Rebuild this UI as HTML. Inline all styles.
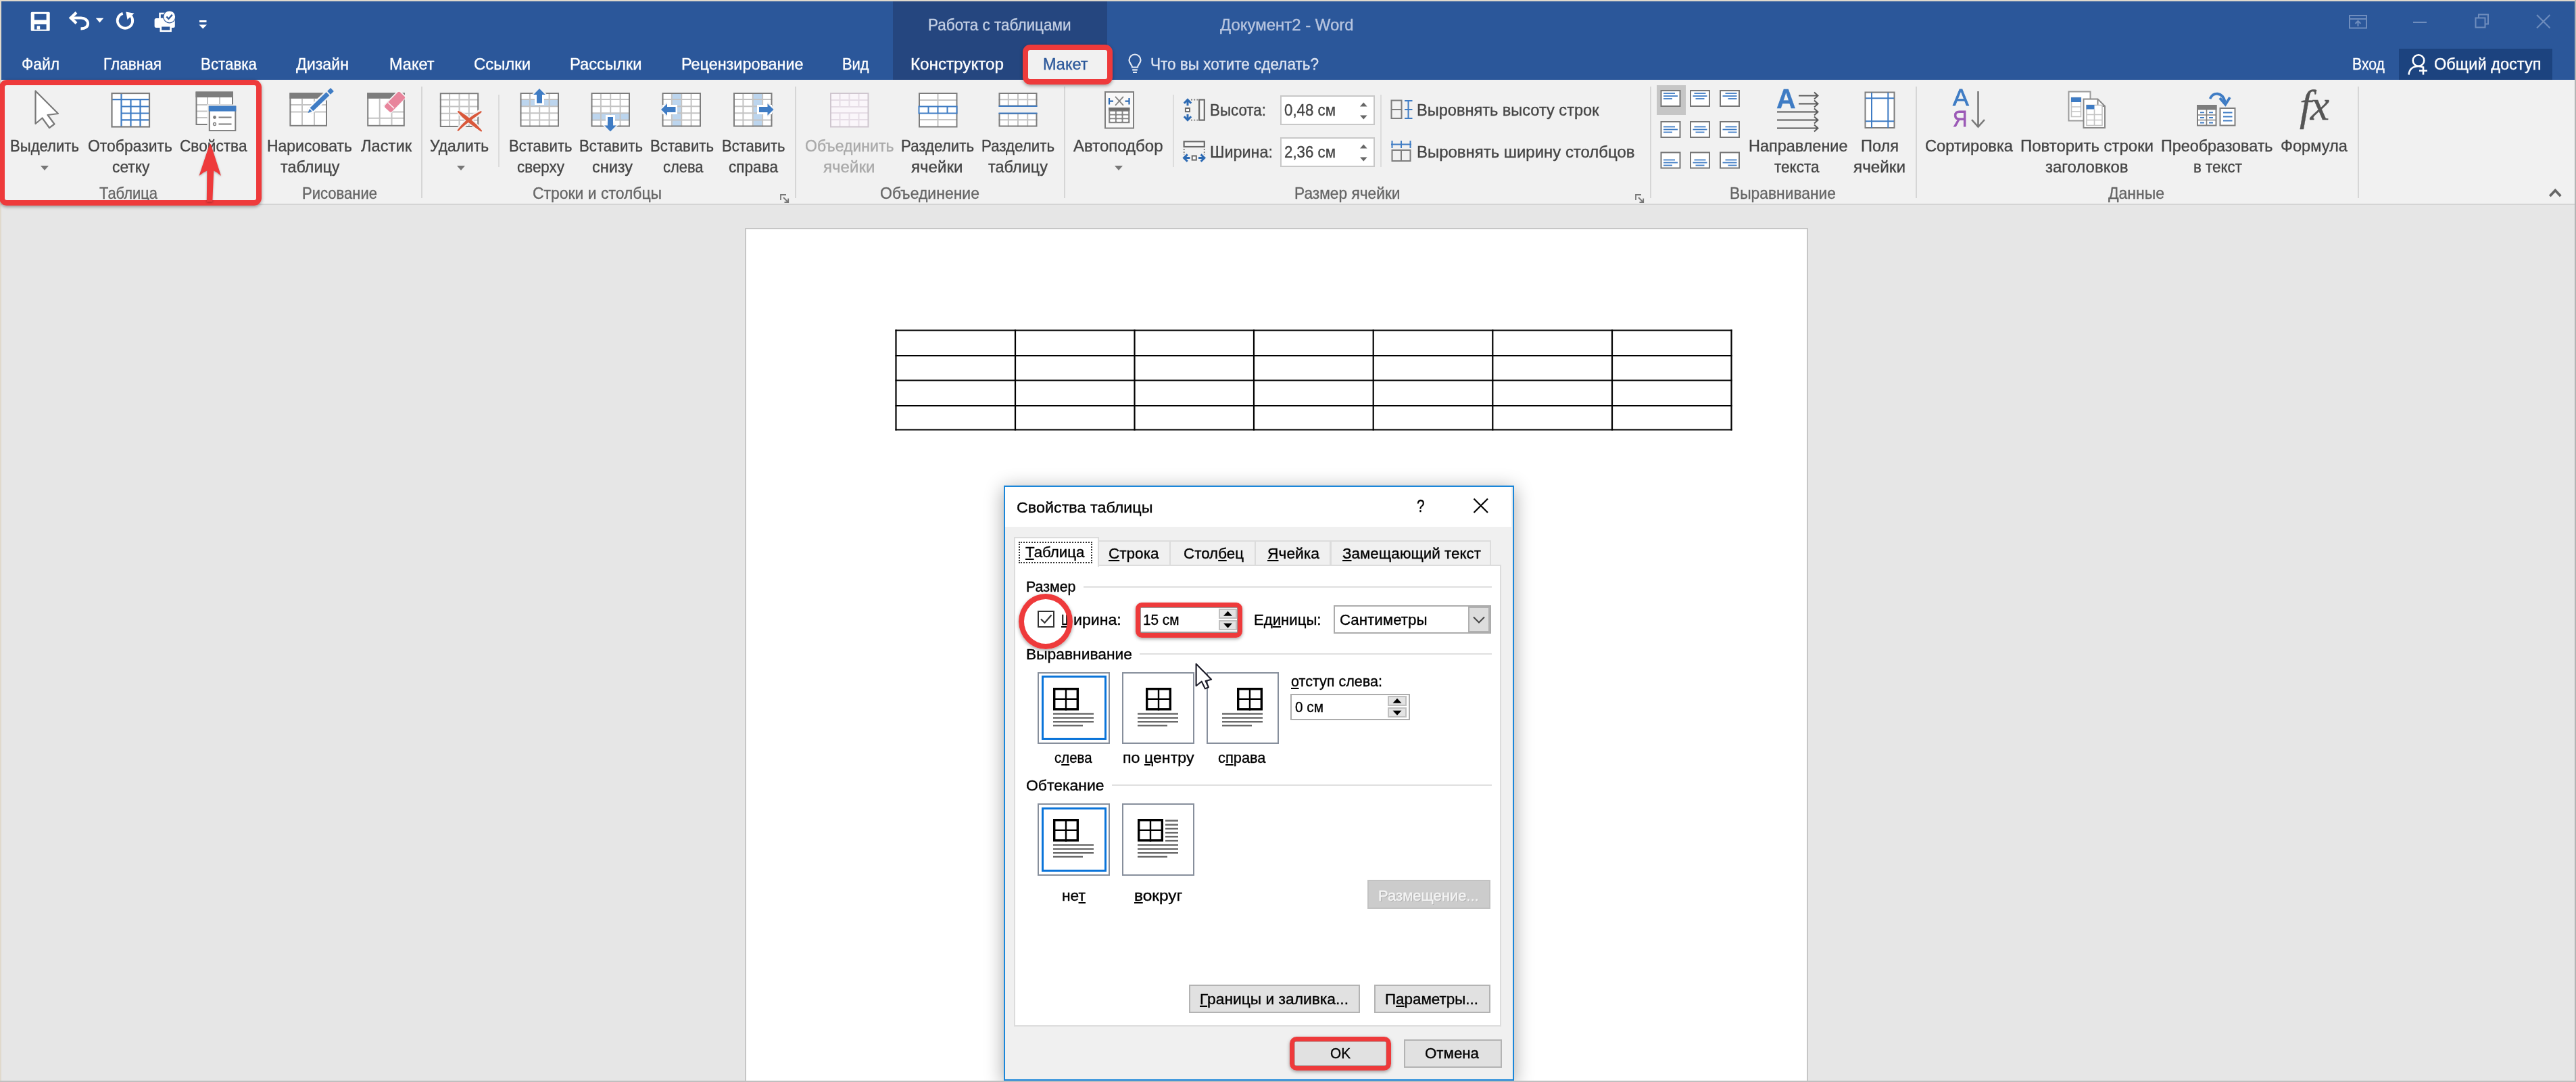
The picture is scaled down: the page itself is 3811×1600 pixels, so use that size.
<!DOCTYPE html>
<html lang="ru"><head><meta charset="utf-8"><title>Word</title><style>
html,body{margin:0;padding:0}
body{width:3811px;height:1600px;overflow:hidden;background:#e6e6e6;position:relative;
font-family:"Liberation Sans",sans-serif;}
.a{position:absolute;display:block}
.t{position:absolute;white-space:nowrap;transform-origin:0 0;font-family:"Liberation Sans",sans-serif;-webkit-text-stroke:0.35px currentColor;}
u{text-decoration:underline;text-decoration-thickness:1.6px;text-underline-offset:2.2px}
</style></head><body>
<div class="a" style="left:0.00px;top:0.00px;width:3811.00px;height:2.00px;background:#e0d9cc;"></div>
<div class="a" style="left:0.00px;top:0.00px;width:2.00px;height:1600.00px;background:#e0d9cc;"></div>
<div class="a" style="left:3809.00px;top:0.00px;width:2.00px;height:1600.00px;background:#b4b4b4;"></div>
<div class="a" style="left:2.00px;top:2.00px;width:3807.00px;height:116.00px;background:#2b579a;"></div>
<div class="a" style="left:1320.50px;top:2.00px;width:317.00px;height:116.00px;background:#25467f;"></div>
<div class="a" style="left:3549.00px;top:71.50px;width:227.00px;height:46.50px;background:#1c437f;"></div>
<div class="a" style="left:2.00px;top:118.00px;width:3807.00px;height:183.00px;background:#f1f1f1;"></div>
<div class="a" style="left:2.00px;top:299.50px;width:3807.00px;height:1.50px;background:#f8f8f8;"></div>
<div class="a" style="left:2.00px;top:301.00px;width:3807.00px;height:2.00px;background:#d4d4d4;"></div>
<svg class="a" style="left:0.00px;top:0.00px;" width="330" height="60" viewBox="0 0 330 60"><rect x="45.700" y="17.800" width="28" height="28" rx="1.500" fill="#fff"/><rect x="50.800" y="20.800" width="17.800" height="8.700" fill="#2b579a"/><rect x="50.800" y="36" width="17.800" height="7.600" fill="#2b579a"/><rect x="54.600" y="38.300" width="4.600" height="5.300" fill="#fff"/><path d="M105.500 26.500h14.500c5.500 0 10 3.500 10 8.500 0 4.500-4 7.500-10.500 7.300" fill="none" stroke="#fff" stroke-width="4.200"/><path d="M113 18.500l-8.300 8 8.300 8" fill="none" stroke="#fff" stroke-width="4.200"/><path d="M141.800 26.800h11.400l-5.700 6.700z" fill="#fff"/><path d="M181.700 19.800A11.200 11.200 0 1 0 193.800 23.600" fill="none" stroke="#fff" stroke-width="3.900"/><path d="M186.300 17.600l12.200 2.100-10 9.300z" fill="#fff"/><rect x="228.600" y="27.100" width="30.200" height="14" rx="2.500" fill="#fff"/><rect x="236.500" y="20" width="9" height="8" fill="none" stroke="#fff" stroke-width="2.600"/><rect x="237.800" y="38.200" width="14.800" height="7.600" fill="#2b579a" stroke="#fff" stroke-width="2.600"/><circle cx="250.700" cy="24.800" r="9.600" fill="#2b579a"/><circle cx="250.700" cy="24.800" r="8.400" fill="#fff"/><path d="M246.300 24.600l3.200 3.200 5.300-6" fill="none" stroke="#2b579a" stroke-width="2.400"/><rect x="295" y="30" width="10.500" height="3" fill="#fff"/><path d="M294.400 36.400h11.600l-5.800 6z" fill="#fff"/></svg>
<div class="t" style="left:1372.50px;top:25.18px;font-size:24px;line-height:24px;color:#c3cfe4;transform:scaleX(0.9372);">Работа с таблицами</div>
<div class="t" style="left:1804.50px;top:25.18px;font-size:24px;line-height:24px;color:#b7c5df;transform:scaleX(0.9972);">Документ2 - Word</div>
<svg class="a" style="left:3460.00px;top:10.00px;" width="330" height="40" viewBox="3460 10 330 40"><g fill="none" stroke="#6f8dbd" stroke-width="2"><rect x="3476" y="23" width="25" height="18.5"/><path d="M3476 28h25"/><path d="M3488.5 39v-8m-4 4l4-4 4 4"/><path d="M3570 33h20"/><rect x="3662.5" y="26.5" width="14" height="14"/><path d="M3667 26v-4.5h14v14h-4.5"/><path d="M3753 22l19.5 19.5m0-19.5l-19.5 19.5"/></g></svg>
<div class="t" style="left:32.00px;top:82.68px;font-size:24px;line-height:24px;color:#fff;transform:scaleX(0.9491);">Файл</div>
<div class="t" style="left:153.00px;top:82.68px;font-size:24px;line-height:24px;color:#fff;transform:scaleX(0.9415);">Главная</div>
<div class="t" style="left:297.00px;top:82.68px;font-size:24px;line-height:24px;color:#fff;transform:scaleX(0.9304);">Вставка</div>
<div class="t" style="left:438.00px;top:82.68px;font-size:24px;line-height:24px;color:#fff;transform:scaleX(0.9669);">Дизайн</div>
<div class="t" style="left:576.00px;top:82.68px;font-size:24px;line-height:24px;color:#fff;transform:scaleX(0.9790);">Макет</div>
<div class="t" style="left:700.50px;top:82.68px;font-size:24px;line-height:24px;color:#fff;transform:scaleX(0.9942);">Ссылки</div>
<div class="t" style="left:843.00px;top:82.68px;font-size:24px;line-height:24px;color:#fff;transform:scaleX(0.9887);">Рассылки</div>
<div class="t" style="left:1007.50px;top:82.68px;font-size:24px;line-height:24px;color:#fff;transform:scaleX(0.9740);">Рецензирование</div>
<div class="t" style="left:1245.50px;top:82.68px;font-size:24px;line-height:24px;color:#fff;transform:scaleX(0.9097);">Вид</div>
<div class="t" style="left:1347.00px;top:82.68px;font-size:24px;line-height:24px;color:#fff;transform:scaleX(1.0085);">Конструктор</div>
<div class="a" style="left:1519.00px;top:72.00px;width:120.00px;height:46.00px;background:#f1f1f1;"></div>
<div class="t" style="left:1543.00px;top:82.68px;font-size:24px;line-height:24px;color:#2b579a;transform:scaleX(0.9790);">Макет</div>
<svg class="a" style="left:1664.00px;top:78.00px;" width="30" height="34" viewBox="0 0 30 34"><g fill="none" stroke="#e3e9f4" stroke-width="2.2"><path d="M11 21.5c0-4-4.5-5.5-4.5-10.5a8.5 8.5 0 0 1 17 0c0 5-4.500 6.500-4.500 10.500z"/><path d="M11.2 25.300h7.600M12 29h6"/></g></svg>
<div class="t" style="left:1702.00px;top:82.68px;font-size:24px;line-height:24px;color:#dde4f1;transform:scaleX(0.9385);">Что вы хотите сделать?</div>
<div class="t" style="left:3480.00px;top:83.18px;font-size:24px;line-height:24px;color:#fff;transform:scaleX(0.8841);">Вход</div>
<svg class="a" style="left:3558.00px;top:76.00px;" width="40" height="40" viewBox="0 0 40 40"><g fill="none" stroke="#fff" stroke-width="2.6"><circle cx="20" cy="13.5" r="8.3"/><path d="M5.500 34.500c1-9 7-12.500 14.500-12.500c3 0 5.500.6 7.500 1.800"/><path d="M27 22.500v12M21 28.500h12"/></g></svg>
<div class="t" style="left:3601.00px;top:83.18px;font-size:24px;line-height:24px;color:#fff;transform:scaleX(0.9829);">Общий доступ</div>
<div class="a" style="left:622.50px;top:127.50px;width:2.00px;height:165.00px;background:#d6d6d6;"></div>
<div class="a" style="left:1176.00px;top:127.50px;width:2.00px;height:165.00px;background:#d6d6d6;"></div>
<div class="a" style="left:1574.00px;top:127.50px;width:2.00px;height:165.00px;background:#d6d6d6;"></div>
<div class="a" style="left:2441.00px;top:127.50px;width:2.00px;height:165.00px;background:#d6d6d6;"></div>
<div class="a" style="left:2833.50px;top:127.50px;width:2.00px;height:165.00px;background:#d6d6d6;"></div>
<div class="a" style="left:3488.00px;top:127.50px;width:2.00px;height:165.00px;background:#d6d6d6;"></div>
<div class="a" style="left:737.00px;top:139.50px;width:2.00px;height:107.50px;background:#dcdcdc;"></div>
<div class="a" style="left:1735.00px;top:139.50px;width:2.00px;height:107.50px;background:#dcdcdc;"></div>
<div class="a" style="left:2042.00px;top:139.50px;width:2.00px;height:107.50px;background:#dcdcdc;"></div>
<div class="a" style="left:1894.00px;top:141.00px;width:140.00px;height:44.00px;background:#fff;border:2px solid #c8c8c8;box-sizing:border-box;"></div>
<svg class="a" style="left:2011.00px;top:150.00px;" width="13" height="28" viewBox="0 0 13 28"><path d="M1 7.500l5.300-6 5.300 6zM1 20.500l5.300 6 5.300-6z" fill="#666"/></svg>
<div class="a" style="left:1894.00px;top:203.00px;width:140.00px;height:44.00px;background:#fff;border:2px solid #c8c8c8;box-sizing:border-box;"></div>
<svg class="a" style="left:2011.00px;top:212.00px;" width="13" height="28" viewBox="0 0 13 28"><path d="M1 7.500l5.300-6 5.300 6zM1 20.500l5.300 6 5.300-6z" fill="#666"/></svg>
<div class="t" style="left:15.00px;top:203.68px;font-size:24px;line-height:24px;color:#444444;transform:scaleX(0.9212);">Выделить</div>
<div class="t" style="left:130.00px;top:203.68px;font-size:24px;line-height:24px;color:#444444;transform:scaleX(0.9555);">Отобразить</div>
<div class="t" style="left:165.50px;top:234.68px;font-size:24px;line-height:24px;color:#444444;transform:scaleX(0.9517);">сетку</div>
<div class="t" style="left:266.00px;top:203.68px;font-size:24px;line-height:24px;color:#444444;transform:scaleX(0.9441);">Свойства</div>
<div class="t" style="left:395.00px;top:203.68px;font-size:24px;line-height:24px;color:#444444;transform:scaleX(0.9556);">Нарисовать</div>
<div class="t" style="left:415.00px;top:234.68px;font-size:24px;line-height:24px;color:#444444;transform:scaleX(0.9734);">таблицу</div>
<div class="t" style="left:534.00px;top:203.68px;font-size:24px;line-height:24px;color:#444444;transform:scaleX(0.9869);">Ластик</div>
<div class="t" style="left:636.00px;top:203.68px;font-size:24px;line-height:24px;color:#444444;transform:scaleX(0.9495);">Удалить</div>
<div class="t" style="left:752.50px;top:203.68px;font-size:24px;line-height:24px;color:#444444;transform:scaleX(0.9191);">Вставить</div>
<div class="t" style="left:764.50px;top:234.68px;font-size:24px;line-height:24px;color:#444444;transform:scaleX(0.9345);">сверху</div>
<div class="t" style="left:857.00px;top:203.68px;font-size:24px;line-height:24px;color:#444444;transform:scaleX(0.9240);">Вставить</div>
<div class="t" style="left:875.50px;top:234.68px;font-size:24px;line-height:24px;color:#444444;transform:scaleX(0.9773);">снизу</div>
<div class="t" style="left:962.00px;top:203.68px;font-size:24px;line-height:24px;color:#444444;transform:scaleX(0.9240);">Вставить</div>
<div class="t" style="left:980.50px;top:234.68px;font-size:24px;line-height:24px;color:#444444;transform:scaleX(0.9128);">слева</div>
<div class="t" style="left:1067.50px;top:203.68px;font-size:24px;line-height:24px;color:#444444;transform:scaleX(0.9191);">Вставить</div>
<div class="t" style="left:1078.00px;top:234.68px;font-size:24px;line-height:24px;color:#444444;transform:scaleX(0.9417);">справа</div>
<div class="t" style="left:1190.50px;top:203.68px;font-size:24px;line-height:24px;color:#a9a9a9;transform:scaleX(0.9598);">Объединить</div>
<div class="t" style="left:1218.00px;top:234.68px;font-size:24px;line-height:24px;color:#a9a9a9;transform:scaleX(1.0045);">ячейки</div>
<div class="t" style="left:1333.00px;top:203.68px;font-size:24px;line-height:24px;color:#444444;transform:scaleX(0.9292);">Разделить</div>
<div class="t" style="left:1348.00px;top:234.68px;font-size:24px;line-height:24px;color:#444444;transform:scaleX(1.0045);">ячейки</div>
<div class="t" style="left:1452.00px;top:203.68px;font-size:24px;line-height:24px;color:#444444;transform:scaleX(0.9292);">Разделить</div>
<div class="t" style="left:1462.00px;top:234.68px;font-size:24px;line-height:24px;color:#444444;transform:scaleX(0.9789);">таблицу</div>
<div class="t" style="left:1588.00px;top:203.68px;font-size:24px;line-height:24px;color:#444444;transform:scaleX(0.9995);">Автоподбор</div>
<div class="t" style="left:1789.50px;top:150.68px;font-size:24px;line-height:24px;color:#444444;transform:scaleX(0.9317);">Высота:</div>
<div class="t" style="left:1789.50px;top:212.68px;font-size:24px;line-height:24px;color:#444444;transform:scaleX(0.9746);">Ширина:</div>
<div class="t" style="left:1900.00px;top:150.68px;font-size:24px;line-height:24px;color:#444444;transform:scaleX(0.9282);">0,48 см</div>
<div class="t" style="left:1900.00px;top:212.68px;font-size:24px;line-height:24px;color:#444444;transform:scaleX(0.9282);">2,36 см</div>
<div class="t" style="left:2096.00px;top:150.68px;font-size:24px;line-height:24px;color:#444444;transform:scaleX(0.9824);">Выровнять высоту строк</div>
<div class="t" style="left:2096.00px;top:212.68px;font-size:24px;line-height:24px;color:#444444;transform:scaleX(0.9974);">Выровнять ширину столбцов</div>
<div class="t" style="left:2586.50px;top:203.68px;font-size:24px;line-height:24px;color:#444444;transform:scaleX(0.9771);">Направление</div>
<div class="t" style="left:2625.00px;top:234.68px;font-size:24px;line-height:24px;color:#444444;transform:scaleX(0.9378);">текста</div>
<div class="t" style="left:2753.00px;top:203.68px;font-size:24px;line-height:24px;color:#444444;transform:scaleX(0.9812);">Поля</div>
<div class="t" style="left:2742.00px;top:234.68px;font-size:24px;line-height:24px;color:#444444;transform:scaleX(1.0110);">ячейки</div>
<div class="t" style="left:2848.00px;top:203.68px;font-size:24px;line-height:24px;color:#444444;transform:scaleX(0.9869);">Сортировка</div>
<div class="t" style="left:2989.00px;top:203.68px;font-size:24px;line-height:24px;color:#444444;transform:scaleX(0.9979);">Повторить строки</div>
<div class="t" style="left:3025.50px;top:234.68px;font-size:24px;line-height:24px;color:#444444;transform:scaleX(0.9988);">заголовков</div>
<div class="t" style="left:3197.00px;top:203.68px;font-size:24px;line-height:24px;color:#444444;transform:scaleX(0.9715);">Преобразовать</div>
<div class="t" style="left:3245.00px;top:234.68px;font-size:24px;line-height:24px;color:#444444;transform:scaleX(0.9320);">в текст</div>
<div class="t" style="left:3374.00px;top:203.68px;font-size:24px;line-height:24px;color:#444444;transform:scaleX(0.9847);">Формула</div>
<div class="t" style="left:147.00px;top:274.18px;font-size:24px;line-height:24px;color:#666666;transform:scaleX(0.9139);">Таблица</div>
<div class="t" style="left:447.00px;top:274.18px;font-size:24px;line-height:24px;color:#666666;transform:scaleX(0.9183);">Рисование</div>
<div class="t" style="left:788.00px;top:274.18px;font-size:24px;line-height:24px;color:#666666;transform:scaleX(0.9552);">Строки и столбцы</div>
<div class="t" style="left:1302.00px;top:274.18px;font-size:24px;line-height:24px;color:#666666;transform:scaleX(0.9579);">Объединение</div>
<div class="t" style="left:1914.50px;top:274.18px;font-size:24px;line-height:24px;color:#666666;transform:scaleX(0.9467);">Размер ячейки</div>
<div class="t" style="left:2559.00px;top:274.18px;font-size:24px;line-height:24px;color:#666666;transform:scaleX(0.9503);">Выравнивание</div>
<div class="t" style="left:3119.00px;top:274.18px;font-size:24px;line-height:24px;color:#666666;transform:scaleX(0.9572);">Данные</div>
<svg class="a" style="left:60.00px;top:244.50px;" width="12" height="7" viewBox="0 0 12 7"><path d="M0 0h12l-6 7z" fill="#777"/></svg>
<svg class="a" style="left:675.50px;top:244.50px;" width="12" height="7" viewBox="0 0 12 7"><path d="M0 0h12l-6 7z" fill="#777"/></svg>
<svg class="a" style="left:1648.50px;top:244.50px;" width="12" height="7" viewBox="0 0 12 7"><path d="M0 0h12l-6 7z" fill="#777"/></svg>
<svg class="a" style="left:1154.00px;top:287.00px;" width="14" height="14" viewBox="0 0 14 14"><g fill="none" stroke="#777" stroke-width="1.8"><path d="M1 9V1h8"/><path d="M5 5l7 7M12.200 6.500v5.700h-5.700"/></g></svg>
<svg class="a" style="left:2419.00px;top:287.00px;" width="14" height="14" viewBox="0 0 14 14"><g fill="none" stroke="#777" stroke-width="1.8"><path d="M1 9V1h8"/><path d="M5 5l7 7M12.200 6.500v5.700h-5.700"/></g></svg>
<svg class="a" style="left:3769.00px;top:277.00px;" width="23" height="16" viewBox="0 0 23 16"><path d="M3.300 13l8-8.500 8 8.500" fill="none" stroke="#666" stroke-width="3.800"/></svg>
<svg class="a" style="left:0.00px;top:120.00px;" width="2120" height="130" viewBox="0 120 2120 130"><path d="M52.500 134.500V183l10-8.500 10.500 14.500 7.500-5.500-10-13.500 15.500-2z" fill="#fff" stroke="#7a7a7a" stroke-width="2.2" stroke-linejoin="round"/><rect x="165.5" y="138" width="55" height="49" fill="#fff"/><path d="M179.5 138V187" stroke="#3f7cc4" stroke-width="2.2"/><path d="M193.5 147V187" stroke="#3f7cc4" stroke-width="2.2"/><path d="M207.5 147V187" stroke="#3f7cc4" stroke-width="2.2"/><path d="M165 147.200H221" stroke="#3f7cc4" stroke-width="2.2"/><path d="M179.500 157.5H221" stroke="#3f7cc4" stroke-width="2.2"/><path d="M179.500 167.5H221" stroke="#3f7cc4" stroke-width="2.2"/><path d="M179.500 177.3H221" stroke="#3f7cc4" stroke-width="2.2"/><rect x="165.500" y="138" width="55.500" height="49.500" fill="none" stroke="#7d7d7d" stroke-width="2.2"/><rect x="290" y="136" width="54" height="48" fill="#fff"/><path d="M307 144v11M325 144v11" stroke="#c3c3c3" stroke-width="2"/><path d="M290 155H344" stroke="#c3c3c3" stroke-width="2"/><path d="M290 164.5H344" stroke="#c3c3c3" stroke-width="2"/><path d="M290 174H344" stroke="#c3c3c3" stroke-width="2"/><rect x="290.500" y="136.500" width="53.500" height="47.500" fill="none" stroke="#7d7d7d" stroke-width="2"/><rect x="289.500" y="135.500" width="55.500" height="8.500" fill="#7d7d7d"/><rect x="306.500" y="154.500" width="45" height="42" fill="#f1f1f1"/><rect x="309.800" y="157.600" width="38.500" height="35.500" fill="#fff" stroke="#7d7d7d" stroke-width="2"/><rect x="308.800" y="156.600" width="40.500" height="8" fill="#3f7cc4"/><circle cx="317.500" cy="173.500" r="2.400" fill="#7d7d7d"/><circle cx="317.500" cy="183.500" r="2" fill="none" stroke="#7d7d7d" stroke-width="1.300"/><path d="M323.500 173.500h19M323.500 183.500h19" stroke="#7d7d7d" stroke-width="1.800"/><rect x="429" y="138" width="54" height="48" fill="#fff"/><path d="M447 146v40M465 146v40M429 155h54M429 165.500h54" stroke="#c3c3c3" stroke-width="2"/><rect x="429.400" y="138.200" width="53.600" height="47.600" fill="none" stroke="#7d7d7d" stroke-width="2"/><rect x="428.400" y="137.200" width="55.600" height="8.600" fill="#7d7d7d"/><path d="M461.5 169.0L496.8 135.2L489.1 127.1L453.8 160.9z" fill="#f1f1f1"/><path d="M462.0 168.0L480.8 150.0L473.6 142.5L454.8 160.5z" fill="#fdfdfd"/><path d="M455.5 167.0L461.7 164.8L458.0 160.9z" fill="#3f7cc4"/><path d="M463.3 164.3L487.5 141.1L482.7 136.2L458.6 159.4z" fill="#3f7cc4"/><path d="M488.9 139.7L493.9 135.0L489.1 130.0L484.2 134.8z" fill="#3f7cc4"/><rect x="544" y="138" width="54" height="48" fill="#fff"/><path d="M561.700 146v40M579.500 166v20M544 174.800h54M580 165.500h18" stroke="#c3c3c3" stroke-width="2"/><rect x="544.200" y="138.200" width="53.600" height="47.600" fill="none" stroke="#7d7d7d" stroke-width="2"/><rect x="543.200" y="137.200" width="55.600" height="8.600" fill="#7d7d7d"/><path d="M590.100 132.400l12 11.200-23.800 24.300-12-11.600z" fill="#f6f6f6"/><path d="M588.400 136.600c1.200-1.200 2.400-1.200 3.600-.1l6.300 5.900c1.200 1.200 1.200 2.400.1 3.600l-18.600 19c-1.200 1.200-2.400 1.200-3.600.1l-6.300-5.900c-1.200-1.200-1.200-2.400-.1-3.600z" fill="#e8859c"/><path d="M573.900 151.500l9 8.700" stroke="#fbeef1" stroke-width="1.600"/><rect x="651.8" y="138.2" width="55.4" height="48.8" fill="#fff"/><path d="M665.1 137.2v50.8" stroke="#c3c3c3" stroke-width="2"/><path d="M679.5 137.2v50.8" stroke="#c3c3c3" stroke-width="2"/><path d="M693.8 137.2v50.8" stroke="#c3c3c3" stroke-width="2"/><path d="M650.8 147.4h57.4" stroke="#c3c3c3" stroke-width="2"/><path d="M650.8 157.5h57.4" stroke="#c3c3c3" stroke-width="2"/><path d="M650.8 167.7h57.4" stroke="#c3c3c3" stroke-width="2"/><path d="M650.8 177.8h57.4" stroke="#c3c3c3" stroke-width="2"/><rect x="651.8" y="138.2" width="55.4" height="48.8" fill="none" stroke="#7d7d7d" stroke-width="2"/><path d="M678.500 165.500c11 8 22 17.500 33 27.800" stroke="#f1f1f1" stroke-width="8" fill="none"/><path d="M710.900 165.500c-12 7.500-23 16.500-33 27" stroke="#f1f1f1" stroke-width="8" fill="none"/><path d="M678 165c7 3 23 15 34 28.500c-13-9-25-17-34-28.500z" fill="#d9583b" stroke="#d9583b" stroke-width="2.200" stroke-linejoin="round"/><path d="M711.500 165.300c-9 4-24 14-33.800 27.500c11-11 22-18 33.800-27.500z" fill="#d9583b" stroke="#d9583b" stroke-width="2.200" stroke-linejoin="round"/><rect x="770.5" y="138.0" width="55.5" height="48.5" fill="#fff"/><rect x="771" y="147.500" width="54.500" height="10" fill="#bcd5ee"/><path d="M783.9 137v50.5" stroke="#c3c3c3" stroke-width="2"/><path d="M798.2 137v50.5" stroke="#c3c3c3" stroke-width="2"/><path d="M812.6 137v50.5" stroke="#c3c3c3" stroke-width="2"/><path d="M769.5 147.1h57.5" stroke="#c3c3c3" stroke-width="2"/><path d="M769.5 157.2h57.5" stroke="#c3c3c3" stroke-width="2"/><path d="M769.5 167.3h57.5" stroke="#c3c3c3" stroke-width="2"/><path d="M769.5 177.4h57.5" stroke="#c3c3c3" stroke-width="2"/><rect x="770.5" y="138.0" width="55.5" height="48.5" fill="none" stroke="#7d7d7d" stroke-width="2"/><path d="M798 128l11.500 12h-6v14h-11v-14h-6z" fill="#f1f1f1"/><rect x="791" y="137" width="14" height="18" fill="#fff"/><path d="M798 131l8.800 9h-4.800v12.500h-8v-12.500h-4.800z" fill="#3f7cc4"/><rect x="875.5" y="138.0" width="55.5" height="48.5" fill="#fff"/><rect x="876" y="168" width="54.500" height="10.500" fill="#bcd5ee"/><path d="M888.9 137v50.5" stroke="#c3c3c3" stroke-width="2"/><path d="M903.2 137v50.5" stroke="#c3c3c3" stroke-width="2"/><path d="M917.6 137v50.5" stroke="#c3c3c3" stroke-width="2"/><path d="M874.5 147.1h57.5" stroke="#c3c3c3" stroke-width="2"/><path d="M874.5 157.2h57.5" stroke="#c3c3c3" stroke-width="2"/><path d="M874.5 167.3h57.5" stroke="#c3c3c3" stroke-width="2"/><path d="M874.5 177.4h57.5" stroke="#c3c3c3" stroke-width="2"/><rect x="875.5" y="138.0" width="55.5" height="48.5" fill="none" stroke="#7d7d7d" stroke-width="2"/><rect x="896" y="170" width="14" height="18" fill="#fff"/><path d="M903 197l11.500-12h-6v-4h-11v4h-6z" fill="#f1f1f1"/><path d="M903 194.500l8.800-9h-4.800v-12.500h-8v12.500h-4.800z" fill="#3f7cc4"/><rect x="980.5" y="138.0" width="55.5" height="48.5" fill="#fff"/><rect x="995" y="138.500" width="12.500" height="47.500" fill="#bcd5ee"/><path d="M993.9 137v50.5" stroke="#c3c3c3" stroke-width="2"/><path d="M1008.2 137v50.5" stroke="#c3c3c3" stroke-width="2"/><path d="M1022.6 137v50.5" stroke="#c3c3c3" stroke-width="2"/><path d="M979.5 147.1h57.5" stroke="#c3c3c3" stroke-width="2"/><path d="M979.5 157.2h57.5" stroke="#c3c3c3" stroke-width="2"/><path d="M979.5 167.3h57.5" stroke="#c3c3c3" stroke-width="2"/><path d="M979.5 177.4h57.5" stroke="#c3c3c3" stroke-width="2"/><rect x="980.5" y="138.0" width="55.5" height="48.5" fill="none" stroke="#7d7d7d" stroke-width="2"/><path d="M975 162l12-11.500v6h4v11h-4v6z" fill="#f1f1f1"/><rect x="980" y="155" width="22" height="14" fill="#fff"/><path d="M978 162l9-8.800v4.800h12.500v8h-12.500v4.800z" fill="#3f7cc4"/><rect x="1086.0" y="138.0" width="55.5" height="48.5" fill="#fff"/><rect x="1114.500" y="138.500" width="12.500" height="47.500" fill="#bcd5ee"/><path d="M1099.4 137v50.5" stroke="#c3c3c3" stroke-width="2"/><path d="M1113.8 137v50.5" stroke="#c3c3c3" stroke-width="2"/><path d="M1128.1 137v50.5" stroke="#c3c3c3" stroke-width="2"/><path d="M1085 147.1h57.5" stroke="#c3c3c3" stroke-width="2"/><path d="M1085 157.2h57.5" stroke="#c3c3c3" stroke-width="2"/><path d="M1085 167.3h57.5" stroke="#c3c3c3" stroke-width="2"/><path d="M1085 177.4h57.5" stroke="#c3c3c3" stroke-width="2"/><rect x="1086.0" y="138.0" width="55.5" height="48.5" fill="none" stroke="#7d7d7d" stroke-width="2"/><path d="M1147.500 162l-12-11.500v6h-4v11h4v6z" fill="#f1f1f1"/><rect x="1120" y="155" width="22" height="14" fill="#fff"/><path d="M1144.500 162l-9-8.800v4.800h-12.500v8h12.500v4.800z" fill="#3f7cc4"/><rect x="1229" y="138" width="55" height="49" fill="#faf6fa"/><path d="M1242.5 138v20M1242.5 167v20" stroke="#e6dde6" stroke-width="2"/><path d="M1256.5 138v20M1256.5 167v20" stroke="#e6dde6" stroke-width="2"/><path d="M1270.5 138v20M1270.5 167v20" stroke="#e6dde6" stroke-width="2"/><path d="M1229 148h55" stroke="#e6dde6" stroke-width="2"/><path d="M1229 158h55" stroke="#e6dde6" stroke-width="2"/><path d="M1229 167h55" stroke="#e6dde6" stroke-width="2"/><path d="M1229 177h55" stroke="#e6dde6" stroke-width="2"/><rect x="1229" y="138" width="55.500" height="49.500" fill="none" stroke="#cfc6cf" stroke-width="2"/><rect x="1360" y="138" width="55" height="49" fill="#fff"/><path d="M1387.500 138v20M1387.500 167v20" stroke="#c3c3c3" stroke-width="2"/><path d="M1360 148h55" stroke="#c3c3c3" stroke-width="2"/><path d="M1360 177h55" stroke="#c3c3c3" stroke-width="2"/><rect x="1360" y="138" width="55.500" height="49.500" fill="none" stroke="#7d7d7d" stroke-width="2"/><rect x="1359.500" y="157.500" width="56" height="10" fill="#fff" stroke="#3f7cc4" stroke-width="2"/><path d="M1373.5 157.500v10" stroke="#3f7cc4" stroke-width="2"/><path d="M1387.5 157.500v10" stroke="#3f7cc4" stroke-width="2"/><path d="M1401.5 157.500v10" stroke="#3f7cc4" stroke-width="2"/><rect x="1478.5" y="138.0" width="55" height="18.5" fill="#fff"/><path d="M1491.8 137v20.5" stroke="#c3c3c3" stroke-width="2"/><path d="M1506.0 137v20.5" stroke="#c3c3c3" stroke-width="2"/><path d="M1520.2 137v20.5" stroke="#c3c3c3" stroke-width="2"/><path d="M1477.5 147.2h57" stroke="#c3c3c3" stroke-width="2"/><rect x="1478.5" y="138.0" width="55" height="18.5" fill="none" stroke="#7d7d7d" stroke-width="2"/><rect x="1478.5" y="168.0" width="55" height="18.5" fill="#fff"/><path d="M1491.8 167v20.5" stroke="#c3c3c3" stroke-width="2"/><path d="M1506.0 167v20.5" stroke="#c3c3c3" stroke-width="2"/><path d="M1520.2 167v20.5" stroke="#c3c3c3" stroke-width="2"/><path d="M1477.5 177.2h57" stroke="#c3c3c3" stroke-width="2"/><rect x="1478.5" y="168.0" width="55" height="18.5" fill="none" stroke="#7d7d7d" stroke-width="2"/><path d="M1477.500 157h57M1477.500 167.500h57" stroke="#3f7cc4" stroke-width="2.200"/><rect x="1635" y="136" width="42" height="53.500" fill="#f8f8f8" stroke="#808080" stroke-width="2"/><g stroke="#2d6ab3" stroke-width="2.200" fill="none"><path d="M1641 145v9.500M1670.500 145v9.500M1641 149.700h6M1664.500 149.700h6"/></g><path d="M1650 142.800l12 13M1662 142.800l-12 13" stroke="#808080" stroke-width="1.700"/><rect x="1640.200" y="159" width="31.200" height="23.200" fill="#858585"/><rect x="1640.200" y="159" width="31.200" height="4.500" fill="#6e6e6e"/><rect x="1642.2" y="164.8" width="7.800" height="3.900" rx="1" fill="#fff"/><rect x="1651.8" y="164.8" width="7.800" height="3.900" rx="1" fill="#fff"/><rect x="1661.4" y="164.8" width="7.800" height="3.900" rx="1" fill="#fff"/><rect x="1642.2" y="170.5" width="7.800" height="3.900" rx="1" fill="#fff"/><rect x="1651.8" y="170.5" width="7.800" height="3.900" rx="1" fill="#fff"/><rect x="1661.4" y="170.5" width="7.800" height="3.900" rx="1" fill="#fff"/><rect x="1642.2" y="176.2" width="7.800" height="3.900" rx="1" fill="#fff"/><rect x="1651.8" y="176.2" width="7.800" height="3.900" rx="1" fill="#fff"/><rect x="1661.4" y="176.2" width="7.800" height="3.900" rx="1" fill="#fff"/><rect x="1774.100" y="147.500" width="7.700" height="30.100" fill="#f6f6f6" stroke="#6a6a6a" stroke-width="2.200"/><path d="M1762 147.500h10M1762 177.600h10" stroke="#777" stroke-width="1.800" stroke-dasharray="2 2.200"/><rect x="1753.900" y="160" width="6.100" height="5.100" fill="#fff" stroke="#6a6a6a" stroke-width="2"/><g stroke="#2d6ab3" stroke-width="3" fill="none"><path d="M1757 156.200v-7.500M1751.800 152.800l5.200-5.300 5.200 5.300M1757 168.900v7.500M1751.800 172.300l5.200 5.300 5.200-5.300"/></g><rect x="1751.600" y="209.300" width="30.200" height="7.700" fill="#f6f6f6" stroke="#6a6a6a" stroke-width="2.200"/><path d="M1751.700 220v9M1781.700 220v9" stroke="#777" stroke-width="1.800" stroke-dasharray="2 2.200"/><rect x="1763.700" y="230.500" width="6.100" height="6.100" fill="#fff" stroke="#6a6a6a" stroke-width="2"/><g stroke="#2d6ab3" stroke-width="3" fill="none"><path d="M1760.400 233.600h-8M1756.800 228.400l-5.300 5.200 5.300 5.200M1773 233.600h8M1776.600 228.400l5.300 5.200-5.300 5.200"/></g><rect x="2058.500" y="148.500" width="15" height="26.500" fill="none" stroke="#7d7d7d" stroke-width="2"/><path d="M2058.500 162h15" stroke="#7d7d7d" stroke-width="2"/><g stroke="#3f7cc4" stroke-width="2" fill="none"><path d="M2083.500 148v28M2078 149h11.500M2078 162h11.500M2078 175h11.500"/></g><rect x="2059.500" y="222" width="27" height="16" fill="none" stroke="#7d7d7d" stroke-width="2"/><path d="M2073 222v16" stroke="#7d7d7d" stroke-width="2"/><g stroke="#3f7cc4" stroke-width="2" fill="none"><path d="M2058 213.500h30M2059.500 208v11M2073 208v11M2086.500 208v11"/></g></svg>
<div class="a" style="left:2451.00px;top:125.50px;width:43.00px;height:44.50px;background:#c6c6c6;"></div>
<svg class="a" style="left:2440.00px;top:120.00px;" width="1060" height="135" viewBox="2440 120 1060 135"><rect x="2457.5" y="134" width="28" height="23" fill="#fff" stroke="#777" stroke-width="2"/><path d="M2461.0 138.0h17" stroke="#3f7cc4" stroke-width="1.800"/><path d="M2461.0 142.0h21" stroke="#3f7cc4" stroke-width="1.800"/><path d="M2461.0 146.0h13" stroke="#3f7cc4" stroke-width="1.800"/><rect x="2501" y="134" width="28" height="23" fill="#fff" stroke="#777" stroke-width="2"/><path d="M2506.5 138.0h17" stroke="#3f7cc4" stroke-width="1.800"/><path d="M2504.5 142.0h21" stroke="#3f7cc4" stroke-width="1.800"/><path d="M2508.5 146.0h13" stroke="#3f7cc4" stroke-width="1.800"/><rect x="2545" y="134" width="28" height="23" fill="#fff" stroke="#777" stroke-width="2"/><path d="M2552.5 138.0h17" stroke="#3f7cc4" stroke-width="1.800"/><path d="M2548.5 142.0h21" stroke="#3f7cc4" stroke-width="1.800"/><path d="M2556.5 146.0h13" stroke="#3f7cc4" stroke-width="1.800"/><rect x="2457.5" y="180" width="28" height="23" fill="#fff" stroke="#777" stroke-width="2"/><path d="M2461.0 187.5h17" stroke="#3f7cc4" stroke-width="1.800"/><path d="M2461.0 191.5h21" stroke="#3f7cc4" stroke-width="1.800"/><path d="M2461.0 195.5h13" stroke="#3f7cc4" stroke-width="1.800"/><rect x="2501" y="180" width="28" height="23" fill="#fff" stroke="#777" stroke-width="2"/><path d="M2506.5 187.5h17" stroke="#3f7cc4" stroke-width="1.800"/><path d="M2504.5 191.5h21" stroke="#3f7cc4" stroke-width="1.800"/><path d="M2508.5 195.5h13" stroke="#3f7cc4" stroke-width="1.800"/><rect x="2545" y="180" width="28" height="23" fill="#fff" stroke="#777" stroke-width="2"/><path d="M2552.5 187.5h17" stroke="#3f7cc4" stroke-width="1.800"/><path d="M2548.5 191.5h21" stroke="#3f7cc4" stroke-width="1.800"/><path d="M2556.5 195.5h13" stroke="#3f7cc4" stroke-width="1.800"/><rect x="2457.5" y="225.5" width="28" height="23" fill="#fff" stroke="#777" stroke-width="2"/><path d="M2461.0 236.5h17" stroke="#3f7cc4" stroke-width="1.800"/><path d="M2461.0 240.5h21" stroke="#3f7cc4" stroke-width="1.800"/><path d="M2461.0 244.5h13" stroke="#3f7cc4" stroke-width="1.800"/><rect x="2501" y="225.5" width="28" height="23" fill="#fff" stroke="#777" stroke-width="2"/><path d="M2506.5 236.5h17" stroke="#3f7cc4" stroke-width="1.800"/><path d="M2504.5 240.5h21" stroke="#3f7cc4" stroke-width="1.800"/><path d="M2508.5 244.5h13" stroke="#3f7cc4" stroke-width="1.800"/><rect x="2545" y="225.5" width="28" height="23" fill="#fff" stroke="#777" stroke-width="2"/><path d="M2552.5 236.5h17" stroke="#3f7cc4" stroke-width="1.800"/><path d="M2548.5 240.5h21" stroke="#3f7cc4" stroke-width="1.800"/><path d="M2556.5 244.5h13" stroke="#3f7cc4" stroke-width="1.800"/><g stroke="#5a5a5a" stroke-width="2" fill="none"><path d="M2661 141.4H2689.500M2684 136.4l5.500 5-5.500 5"/><path d="M2661 153.4H2689.500M2684 148.4l5.500 5-5.500 5"/><path d="M2629 165.5H2689.500M2684 160.5l5.500 5-5.500 5"/><path d="M2629 177.5H2689.500M2684 172.5l5.500 5-5.500 5"/><path d="M2629 189.4H2689.500M2684 184.4l5.500 5-5.500 5"/></g><rect x="2759.500" y="136.500" width="43" height="52.500" fill="#fff" stroke="#7d7d7d" stroke-width="2"/><path d="M2769 137v52M2793.300 137v52M2760 145.300h42M2760 179.300h42" stroke="#3f7cc4" stroke-width="2"/><g stroke="#7a7a7a" stroke-width="2.600" fill="none"><path d="M2926.500 135v52M2917 177l9.500 10.500 9.500-10.500"/></g><rect x="3060.500" y="135.500" width="32" height="43" fill="#fff" stroke="#9a9a9a" stroke-width="2"/><rect x="3064.500" y="144.500" width="14" height="28" fill="#fff" stroke="#c3c3c3" stroke-width="1.600"/><rect x="3064" y="144" width="15" height="7" fill="#3f7cc4"/><path d="M3064.500 158h14M3064.500 165h14" stroke="#c3c3c3" stroke-width="1.600"/><path d="M3082.500 146.500h21l10.500 10.500v32h-31.500z" fill="#fff" stroke="#8a8a8a" stroke-width="2"/><path d="M3103.500 146.500v10.500h10.500" fill="none" stroke="#8a8a8a" stroke-width="2"/><rect x="3087" y="155.500" width="23" height="30" fill="#fff" stroke="#c3c3c3" stroke-width="1.600"/><rect x="3086.500" y="155" width="12" height="6.500" fill="#3f7cc4"/><path d="M3098.500 161.500v24M3087 169.500h23M3087 177.500h23" stroke="#c3c3c3" stroke-width="1.600"/><rect x="3251" y="156" width="27.500" height="29.500" fill="#fff" stroke="#7d7d7d" stroke-width="2"/><rect x="3250" y="155" width="29.500" height="7.500" fill="#7d7d7d"/><path d="M3264.500 162v23M3251 170h27M3251 177.500h27" stroke="#7d7d7d" stroke-width="1.600"/><path d="M3255 166.300h6M3268 166.300h6M3255 174h6M3268 174h6M3255 181.500h6M3268 181.500h6" stroke="#3f7cc4" stroke-width="1.800"/><rect x="3284.500" y="160" width="22" height="25.500" fill="#fff" stroke="#7d7d7d" stroke-width="2"/><path d="M3289 166.500h13.500M3289 172.500h13.500M3289 178.500h13.500" stroke="#3f7cc4" stroke-width="1.800"/><path d="M3269.500 146c5-10 18-11 22.500 5" fill="none" stroke="#3f7cc4" stroke-width="3.800"/><path d="M3284 145l8.300 9.500 6.700-10.500" fill="none" stroke="#3f7cc4" stroke-width="3.800"/></svg>
<div class="t" style="left:2627.5px;top:120.5px;font-size:40.5px;line-height:50px;color:#3f7cc4;font-weight:bold;transform:scaleX(0.98)">A</div>
<div class="t" style="left:2888.5px;top:123.5px;font-size:35px;line-height:40px;color:#3f7cc4;-webkit-text-stroke:0.8px #3f7cc4;transform:scaleX(1.02)">A</div>
<div class="t" style="left:2888.5px;top:156px;font-size:33px;line-height:40px;color:#9b59b6;-webkit-text-stroke:0.8px #9b59b6;transform:scaleX(0.9)">Я</div>
<div class="t" style="left:3402px;top:121px;font-family:'Liberation Serif',serif;font-style:italic;font-size:64px;line-height:70px;color:#555;letter-spacing:-2px">fx</div>
<div class="a" style="left:-1.00px;top:117.50px;width:388.00px;height:186.20px;border:8px solid #ee3a3b;border-radius:11px;box-sizing:border-box;box-shadow:0 2px 5px rgba(0,0,0,.35);"></div>
<div class="a" style="left:1513.00px;top:65.50px;width:132.50px;height:59.50px;border:8px solid #ee3a3b;border-radius:11px;box-sizing:border-box;box-shadow:0 2px 5px rgba(0,0,0,.35);"></div>
<svg class="a" style="left:285.00px;top:205.00px;filter:drop-shadow(0 1.5px 1.5px rgba(0,0,0,.3));" width="50" height="100" viewBox="0 0 50 100"><path d="M25 8.500Q26 7.500 27 8.500L42 55Q36.500 49.500 31.200 47.500L29.300 93.500H20.800L21.300 47.500Q15.500 49.500 9.500 55z" fill="#ee3a3b"/></svg>
<div class="a" style="left:1102.00px;top:337.00px;width:1573.00px;height:1265.00px;background:#fff;border:2px solid #c6c6c6;border-bottom:none;box-sizing:border-box;"></div>
<svg class="a" style="left:1320.00px;top:480.00px;" width="1250" height="165" viewBox="1320 480 1250 165"><g stroke="#000" stroke-width="2.200" fill="none"><path d="M1325.5 487.5V636.5"/><path d="M1502 487.5V636.5"/><path d="M1678.5 487.5V636.5"/><path d="M1855 487.5V636.5"/><path d="M2031.7 487.5V636.5"/><path d="M2208.3 487.5V636.5"/><path d="M2385 487.5V636.5"/><path d="M2561.5 487.5V636.5"/><path d="M1324.5 488.5H2562.5"/><path d="M1324.5 526H2562.5"/><path d="M1324.5 562.5H2562.5"/><path d="M1324.5 600H2562.5"/><path d="M1324.5 635.5H2562.5"/></g></svg>
<div class="a" style="left:1485.00px;top:718.00px;width:754.50px;height:880.00px;background:#f0f0f0;border:2px solid #1a86d9;box-sizing:border-box;box-shadow:0 5px 26px 1px rgba(0,0,0,.33);"></div>
<div class="a" style="left:1487.00px;top:720.00px;width:748.50px;height:59.00px;background:#fff;"></div>
<div class="t" style="left:1503.50px;top:739.55px;font-size:22.5px;line-height:22.5px;color:#000;transform:scaleX(1.0373);">Свойства таблицы</div>
<div class="t" style="left:2096.00px;top:735.49px;font-size:26px;line-height:26px;color:#000;transform:scaleX(0.7953);">?</div>
<svg class="a" style="left:2178.00px;top:735.00px;" width="26" height="26" viewBox="0 0 26 26"><path d="M2.500 2.500l20.500 20.500M23 2.500L2.500 23" stroke="#000" stroke-width="2.200" fill="none"/></svg>
<div class="a" style="left:1499.50px;top:835.00px;width:721.00px;height:683.00px;background:#fff;border:2px solid #dcdcdc;box-sizing:border-box;"></div>
<div class="a" style="left:1624.25px;top:798.50px;width:107.50px;height:38.00px;background:#f0f0f0;border:2px solid #dcdcdc;box-sizing:border-box;"></div>
<div class="a" style="left:1730.25px;top:798.50px;width:127.50px;height:38.00px;background:#f0f0f0;border:2px solid #dcdcdc;box-sizing:border-box;"></div>
<div class="a" style="left:1856.25px;top:798.50px;width:113.00px;height:38.00px;background:#f0f0f0;border:2px solid #dcdcdc;box-sizing:border-box;"></div>
<div class="a" style="left:1967.75px;top:798.50px;width:238.50px;height:38.00px;background:#f0f0f0;border:2px solid #dcdcdc;box-sizing:border-box;"></div>
<div class="a" style="left:1499.50px;top:793.50px;width:126.00px;height:44.00px;background:#fff;border:2px solid #dcdcdc;border-bottom:none;box-sizing:border-box;"></div>
<div class="a" style="left:1507.00px;top:801.00px;width:109.00px;height:31.50px;border:2px dotted #333;box-sizing:border-box;"></div>
<div class="t" style="left:1517.00px;top:806.05px;font-size:22.5px;line-height:22.5px;color:#000;transform:scaleX(0.9918);"><u>Т</u>аблица</div>
<div class="t" style="left:1640.00px;top:808.05px;font-size:22.5px;line-height:22.5px;color:#000;transform:scaleX(1.0009);"><u>С</u>трока</div>
<div class="t" style="left:1751.00px;top:808.05px;font-size:22.5px;line-height:22.5px;color:#000;transform:scaleX(0.9946);">Стол<u>б</u>ец</div>
<div class="t" style="left:1875.00px;top:808.05px;font-size:22.5px;line-height:22.5px;color:#000;transform:scaleX(1.0144);"><u>Я</u>чейка</div>
<div class="t" style="left:1986.00px;top:808.05px;font-size:22.5px;line-height:22.5px;color:#000;transform:scaleX(0.9946);"><u>З</u>амещающий текст</div>
<div class="t" style="left:1517.50px;top:857.05px;font-size:22.5px;line-height:22.5px;color:#000;transform:scaleX(0.9504);">Размер</div>
<div class="a" style="left:1602.50px;top:866.50px;width:604.50px;height:2.00px;background:#dfdfdf;"></div>
<div class="a" style="left:1535.00px;top:902.50px;width:25.00px;height:25.00px;background:#fff;border:2px solid #333;box-sizing:border-box;"></div>
<svg class="a" style="left:1535.00px;top:902.50px;" width="25" height="25" viewBox="0 0 25 25"><path d="M5 12.500l5.500 5.500 10-11.500" fill="none" stroke="#333" stroke-width="2.200"/></svg>
<div class="t" style="left:1569.50px;top:906.05px;font-size:22.5px;line-height:22.5px;color:#000;transform:scaleX(0.7759);"><u>Ш</u></div>
<div class="t" style="left:1587.70px;top:906.05px;font-size:22.5px;line-height:22.5px;color:#000;transform:scaleX(1.0285);">ирина:</div>
<div class="a" style="left:1686.00px;top:897.00px;width:146.00px;height:39.00px;background:#fff;border:2px solid #9a9a9a;box-sizing:border-box;"></div>
<div class="t" style="left:1691.00px;top:906.05px;font-size:22.5px;line-height:22.5px;color:#000;transform:scaleX(0.9225);">15 см</div>
<div class="a" style="left:1803.00px;top:900.00px;width:27.00px;height:15.00px;background:#e3e3e3;border:2px solid #c0c0c0;box-sizing:border-box;"></div>
<div class="a" style="left:1803.00px;top:917.00px;width:27.00px;height:15.00px;background:#e3e3e3;border:2px solid #c0c0c0;box-sizing:border-box;"></div>
<svg class="a" style="left:1803.00px;top:900.00px;" width="27" height="32" viewBox="0 0 27 32"><path d="M7.0 10.8h13l-6.500-7z" fill="#000"/><path d="M7.0 21.8h13l-6.500 7z" fill="#000"/></svg>
<div class="t" style="left:1855.00px;top:906.05px;font-size:22.5px;line-height:22.5px;color:#000;transform:scaleX(0.9851);">Ед<u>и</u>ницы:</div>
<div class="a" style="left:1973.00px;top:895.00px;width:233.00px;height:42.00px;background:#fff;border:2px solid #acacac;box-sizing:border-box;"></div>
<div class="a" style="left:2172.00px;top:897.00px;width:32.00px;height:38.00px;background:#dddddd;border:2px solid #b0b0b0;box-sizing:border-box;"></div>
<svg class="a" style="left:2178.00px;top:910.00px;" width="20" height="14" viewBox="0 0 20 14"><path d="M2 2.500l8 8 8-8" fill="none" stroke="#444" stroke-width="2"/></svg>
<div class="t" style="left:1981.50px;top:906.05px;font-size:22.5px;line-height:22.5px;color:#000;transform:scaleX(0.9920);">Сантиметры</div>
<div class="t" style="left:1517.50px;top:957.05px;font-size:22.5px;line-height:22.5px;color:#000;transform:scaleX(1.0137);">Выравнивание</div>
<div class="a" style="left:1686.00px;top:965.50px;width:521.00px;height:2.00px;background:#dfdfdf;"></div>
<div class="a" style="left:1535.00px;top:993.75px;width:107.00px;height:106.50px;background:#fff;border:2px solid #878f9c;box-sizing:border-box;"></div>
<div class="a" style="left:1540.50px;top:999.25px;width:96.00px;height:95.00px;border:3.5px solid #0a74d9;box-sizing:border-box;"></div>
<div class="a" style="left:1659.50px;top:993.75px;width:107.00px;height:106.50px;background:#fff;border:2px solid #878f9c;box-sizing:border-box;"></div>
<div class="a" style="left:1784.50px;top:993.75px;width:107.00px;height:106.50px;background:#fff;border:2px solid #878f9c;box-sizing:border-box;"></div>
<div class="a" style="left:1535.00px;top:1188.00px;width:107.00px;height:106.50px;background:#fff;border:2px solid #878f9c;box-sizing:border-box;"></div>
<div class="a" style="left:1540.50px;top:1193.50px;width:96.00px;height:95.00px;border:3.5px solid #0a74d9;box-sizing:border-box;"></div>
<div class="a" style="left:1659.50px;top:1188.00px;width:107.00px;height:106.50px;background:#fff;border:2px solid #878f9c;box-sizing:border-box;"></div>
<svg class="a" style="left:1530.00px;top:1000.00px;" width="370" height="280" viewBox="1530 1000 370 280"><rect x="1559.7" y="1018.7" width="34.600" height="30.100" fill="#fff" stroke="#000" stroke-width="3.400"/><path d="M1577 1017v33.500M1558 1033.75h38" stroke="#000" stroke-width="2.400"/><path d="M1558 1055.5H1618" stroke="#6a6a6a" stroke-width="2.600"/><path d="M1558 1061.5H1618" stroke="#6a6a6a" stroke-width="2.600"/><path d="M1558 1067.3H1618" stroke="#6a6a6a" stroke-width="2.600"/><path d="M1558 1073H1602" stroke="#6a6a6a" stroke-width="2.600"/><rect x="1696.7" y="1018.7" width="34.600" height="30.100" fill="#fff" stroke="#000" stroke-width="3.400"/><path d="M1714 1017v33.500M1695 1033.75h38" stroke="#000" stroke-width="2.400"/><path d="M1683 1055.5H1743" stroke="#6a6a6a" stroke-width="2.600"/><path d="M1683 1061.5H1743" stroke="#6a6a6a" stroke-width="2.600"/><path d="M1683 1067.3H1743" stroke="#6a6a6a" stroke-width="2.600"/><path d="M1683 1073H1727" stroke="#6a6a6a" stroke-width="2.600"/><rect x="1831.7" y="1018.7" width="34.600" height="30.100" fill="#fff" stroke="#000" stroke-width="3.400"/><path d="M1849 1017v33.500M1830 1033.75h38" stroke="#000" stroke-width="2.400"/><path d="M1808 1055.5H1868" stroke="#6a6a6a" stroke-width="2.600"/><path d="M1808 1061.5H1868" stroke="#6a6a6a" stroke-width="2.600"/><path d="M1808 1067.3H1868" stroke="#6a6a6a" stroke-width="2.600"/><path d="M1808 1073H1852" stroke="#6a6a6a" stroke-width="2.600"/><rect x="1559.7" y="1212.7" width="34.600" height="30.100" fill="#fff" stroke="#000" stroke-width="3.400"/><path d="M1577 1211v33.500M1558 1227.75h38" stroke="#000" stroke-width="2.400"/><path d="M1558 1249.5H1618" stroke="#6a6a6a" stroke-width="2.600"/><path d="M1558 1255.5H1618" stroke="#6a6a6a" stroke-width="2.600"/><path d="M1558 1261.3H1618" stroke="#6a6a6a" stroke-width="2.600"/><path d="M1558 1267H1602" stroke="#6a6a6a" stroke-width="2.600"/><rect x="1684.7" y="1212.7" width="34.600" height="30.100" fill="#fff" stroke="#000" stroke-width="3.400"/><path d="M1702 1211v33.500M1683 1227.75h38" stroke="#000" stroke-width="2.400"/><path d="M1724 1213.5H1743" stroke="#6a6a6a" stroke-width="2.600"/><path d="M1724 1219.5H1743" stroke="#6a6a6a" stroke-width="2.600"/><path d="M1724 1225.3H1743" stroke="#6a6a6a" stroke-width="2.600"/><path d="M1724 1231.3H1743" stroke="#6a6a6a" stroke-width="2.600"/><path d="M1724 1237.2H1743" stroke="#6a6a6a" stroke-width="2.600"/><path d="M1724 1243.2H1743" stroke="#6a6a6a" stroke-width="2.600"/><path d="M1683 1249.5H1743" stroke="#6a6a6a" stroke-width="2.600"/><path d="M1683 1255.5H1743" stroke="#6a6a6a" stroke-width="2.600"/><path d="M1683 1261.3H1743" stroke="#6a6a6a" stroke-width="2.600"/><path d="M1683 1267H1727" stroke="#6a6a6a" stroke-width="2.600"/></svg>
<div class="t" style="left:1560.00px;top:1109.55px;font-size:22.5px;line-height:22.5px;color:#000;transform:scaleX(0.9082);">с<u>л</u>ева</div>
<div class="t" style="left:1660.50px;top:1109.55px;font-size:22.5px;line-height:22.5px;color:#000;transform:scaleX(1.0309);">по <u>ц</u>ентру</div>
<div class="t" style="left:1802.00px;top:1109.55px;font-size:22.5px;line-height:22.5px;color:#000;transform:scaleX(0.9701);">с<u>п</u>рава</div>
<div class="t" style="left:1910.00px;top:996.55px;font-size:22.5px;line-height:22.5px;color:#000;transform:scaleX(0.9580);"><u>о</u>тступ слева:</div>
<div class="a" style="left:1909.00px;top:1025.50px;width:177.00px;height:39.00px;background:#fff;border:2px solid #acacac;box-sizing:border-box;"></div>
<div class="t" style="left:1916.00px;top:1034.55px;font-size:22.5px;line-height:22.5px;color:#000;transform:scaleX(0.9234);">0 см</div>
<div class="a" style="left:2053.00px;top:1029.00px;width:28.00px;height:15.00px;background:#e3e3e3;border:2px solid #c0c0c0;box-sizing:border-box;"></div>
<div class="a" style="left:2053.00px;top:1046.00px;width:28.00px;height:15.00px;background:#e3e3e3;border:2px solid #c0c0c0;box-sizing:border-box;"></div>
<svg class="a" style="left:2053.00px;top:1029.00px;" width="28" height="32" viewBox="0 0 28 32"><path d="M7.5 10.8h13l-6.500-7z" fill="#000"/><path d="M7.5 21.8h13l-6.500 7z" fill="#000"/></svg>
<div class="t" style="left:1517.50px;top:1151.05px;font-size:22.5px;line-height:22.5px;color:#000;transform:scaleX(1.0193);">Обтекание</div>
<div class="a" style="left:1644.50px;top:1160.00px;width:562.50px;height:2.00px;background:#dfdfdf;"></div>
<div class="t" style="left:1571.00px;top:1314.05px;font-size:22.5px;line-height:22.5px;color:#000;transform:scaleX(1.0145);">не<u>т</u></div>
<div class="t" style="left:1677.50px;top:1314.05px;font-size:22.5px;line-height:22.5px;color:#000;transform:scaleX(1.0870);"><u>в</u>округ</div>
<div class="a" style="left:2023.00px;top:1300.50px;width:182.00px;height:43.00px;background:#cccccc;border:2px solid #c2c2c2;box-sizing:border-box;"></div>
<div class="t" style="left:2039.00px;top:1313.55px;font-size:22.5px;line-height:22.5px;color:#f4f4f4;transform:scaleX(0.9812);text-shadow:1px 1px 0 #a9a9a9;">Размещение...</div>
<div class="a" style="left:1759.00px;top:1456.00px;width:253.00px;height:42.00px;background:#e1e1e1;border:2px solid #b3b3b3;box-sizing:border-box;"></div>
<div class="t" style="left:1774.50px;top:1466.65px;font-size:22.5px;line-height:22.5px;color:#000;transform:scaleX(1.0131);"><u>Г</u>раницы и заливка...</div>
<div class="a" style="left:2032.50px;top:1456.00px;width:172.50px;height:42.00px;background:#e1e1e1;border:2px solid #b3b3b3;box-sizing:border-box;"></div>
<div class="t" style="left:2048.50px;top:1466.65px;font-size:22.5px;line-height:22.5px;color:#000;transform:scaleX(0.9950);">П<u>а</u>раметры...</div>
<div class="a" style="left:1914.00px;top:1539.00px;width:138.00px;height:38.00px;background:#e1e1e1;border:2px solid #b3b3b3;box-sizing:border-box;"></div>
<div class="t" style="left:1967.50px;top:1547.25px;font-size:22.5px;line-height:22.5px;color:#000;transform:scaleX(0.9228);">OK</div>
<div class="a" style="left:2076.50px;top:1537.00px;width:145.50px;height:42.00px;background:#e1e1e1;border:2px solid #b3b3b3;box-sizing:border-box;"></div>
<div class="t" style="left:2108.00px;top:1547.25px;font-size:22.5px;line-height:22.5px;color:#000;transform:scaleX(0.9910);">Отмена</div>
<div class="a" style="left:1506.50px;top:877.50px;width:80.00px;height:82.00px;border:8.7px solid #ee3a3b;border-radius:50%;box-sizing:border-box;box-shadow:0 2px 5px rgba(0,0,0,.35);"></div>
<div class="a" style="left:1679.50px;top:890.50px;width:158.50px;height:52.00px;border:7px solid #ee3a3b;border-radius:9px;box-sizing:border-box;box-shadow:0 2px 5px rgba(0,0,0,.35);"></div>
<div class="a" style="left:1908.00px;top:1532.50px;width:150.00px;height:50.50px;border:7px solid #ee3a3b;border-radius:10px;box-sizing:border-box;box-shadow:0 2px 5px rgba(0,0,0,.35);"></div>
<svg class="a" style="left:1764.00px;top:976.00px;" width="36" height="50" viewBox="0 0 36 50"><path d="M5.600 5.800V38.300l8.100-6.600 5.200 10.700 5.100-2.200-4.400-9.200 8.500-2.300z" fill="#fff" stroke="#1c1c28" stroke-width="2.100" stroke-linejoin="round"/></svg>
<div class="a" style="left:0.00px;top:1597.50px;width:3811.00px;height:2.50px;background:#bfbfbf;"></div>
</body></html>
